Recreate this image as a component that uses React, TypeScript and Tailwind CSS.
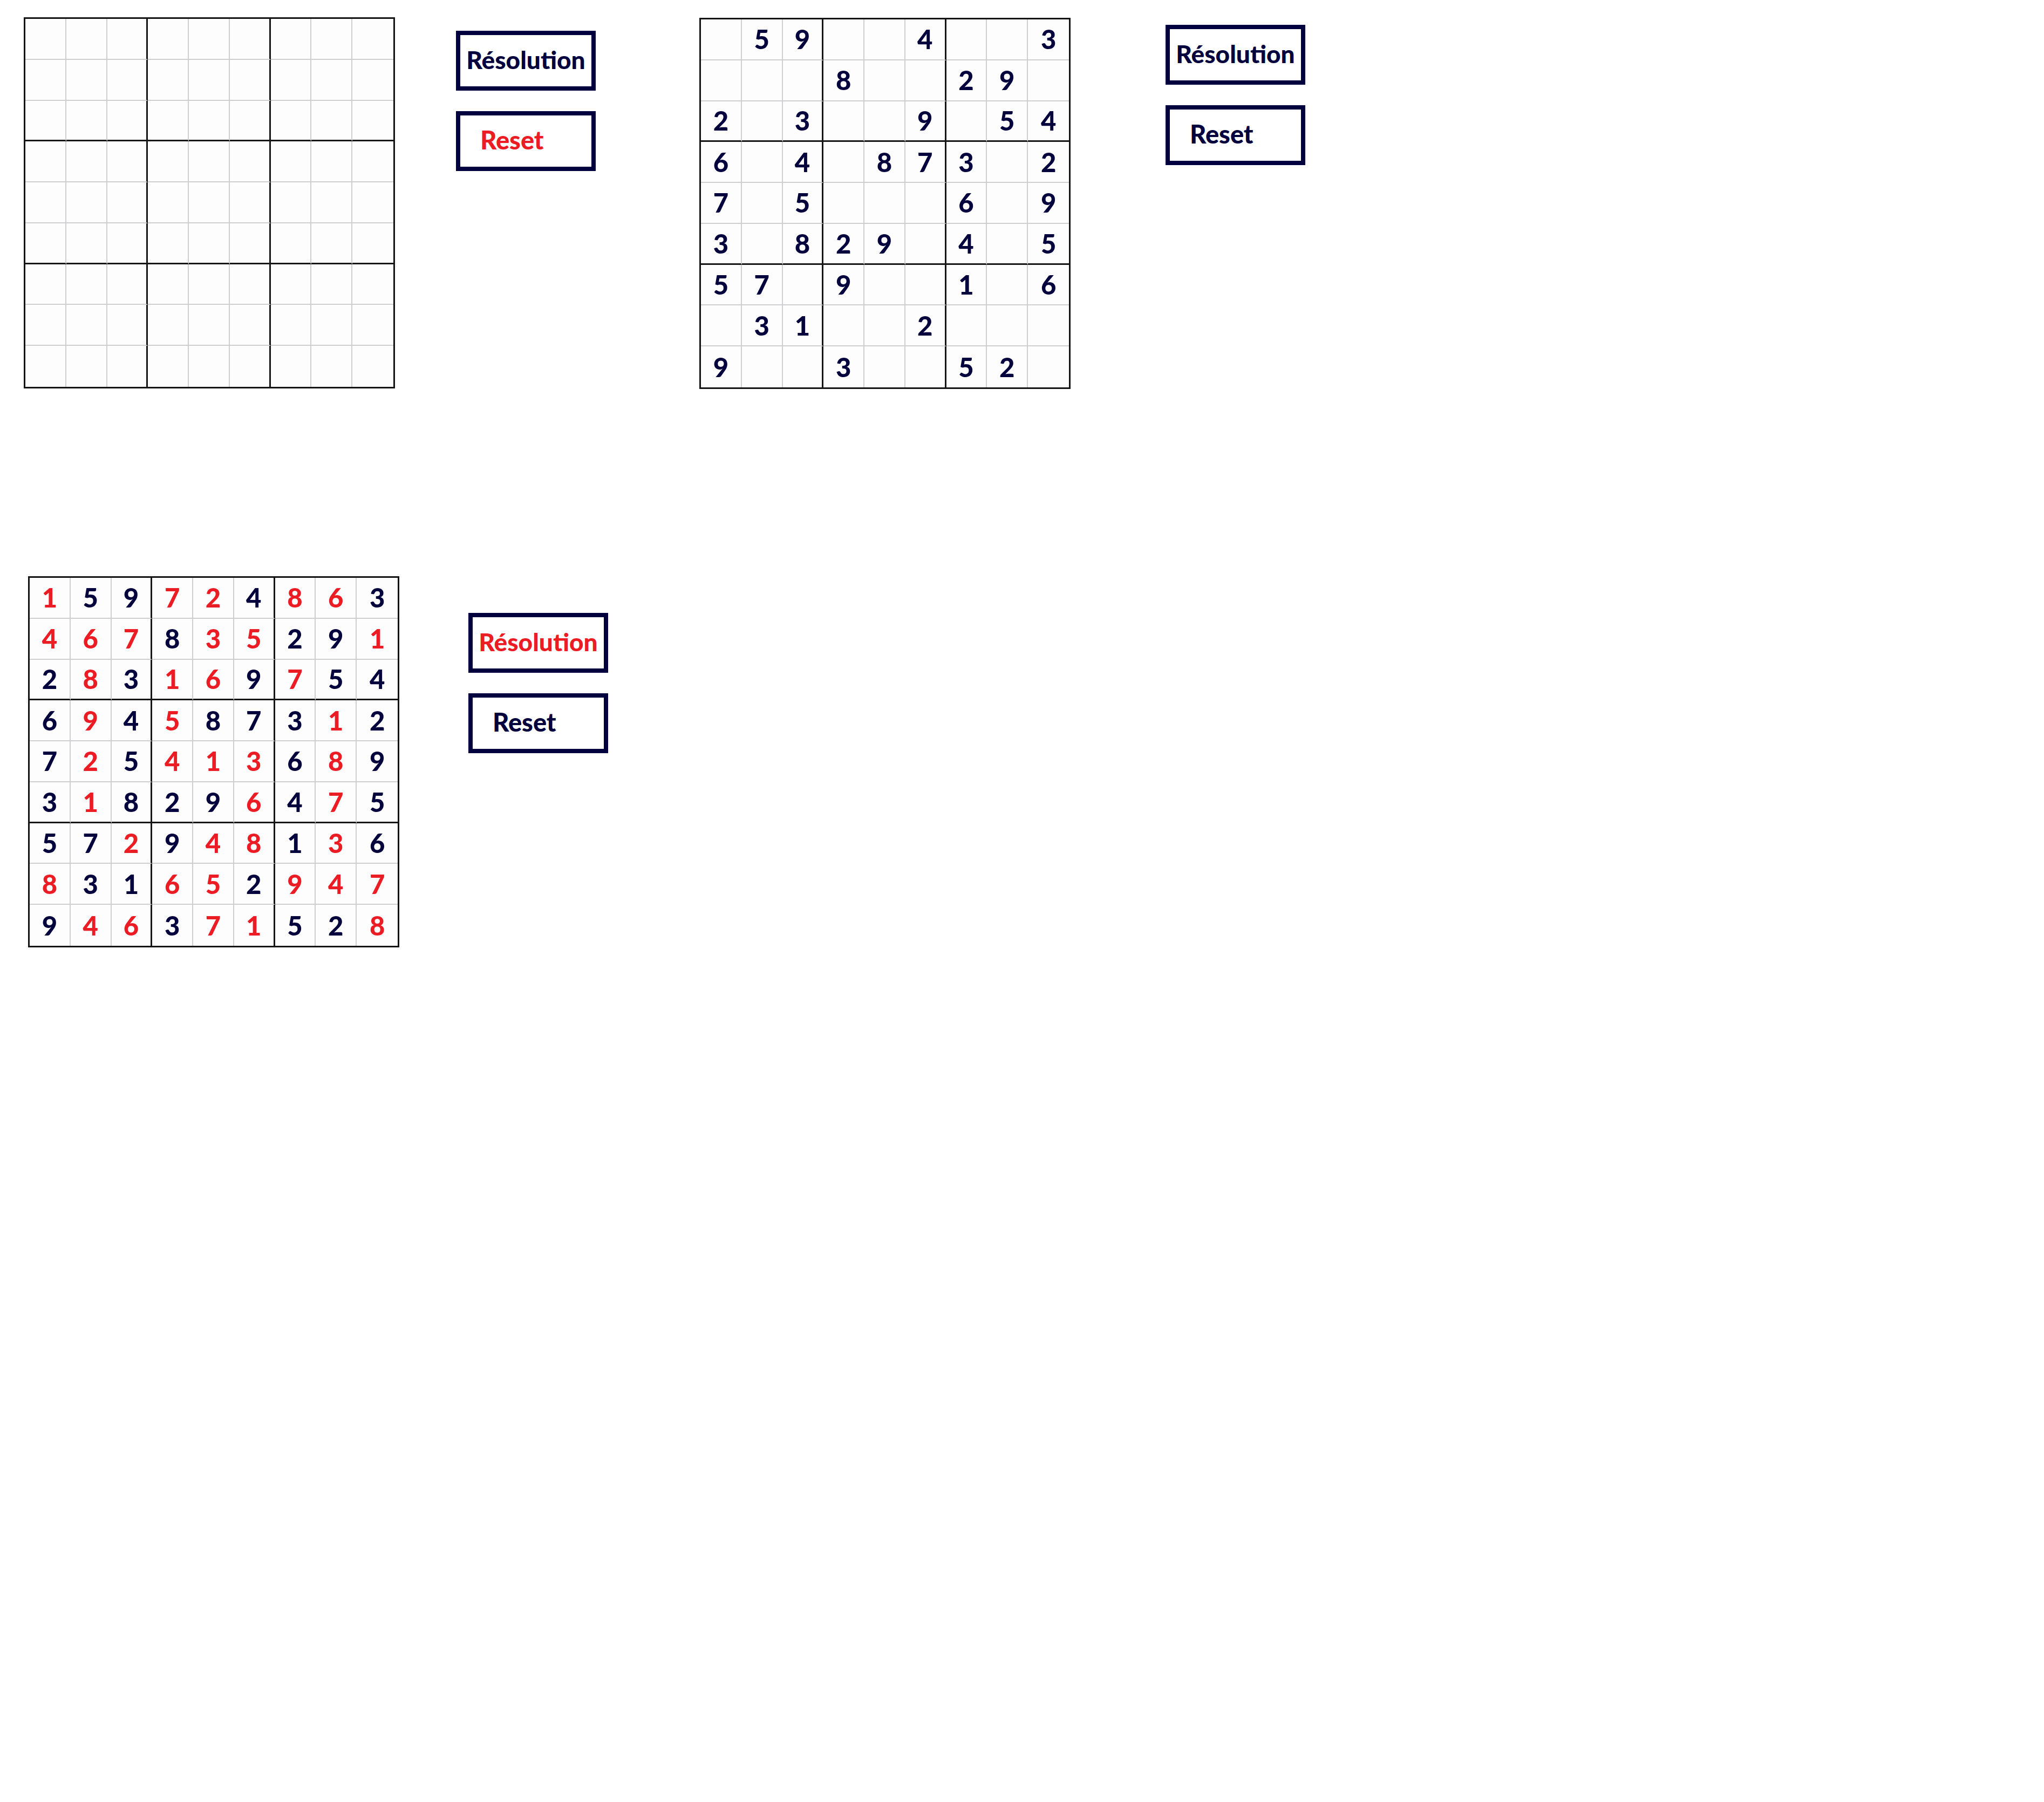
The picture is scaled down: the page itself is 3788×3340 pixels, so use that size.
type Cell = number | null;

const PUZZLE: Cell[][] = [
  [null, 5, 9, null, null, 4, null, null, 3],
  [null, null, null, 8, null, null, 2, 9, null],
  [2, null, 3, null, null, 9, null, 5, 4],
  [6, null, 4, null, 8, 7, 3, null, 2],
  [7, null, 5, null, null, null, 6, null, 9],
  [3, null, 8, 2, 9, null, 4, null, 5],
  [5, 7, null, 9, null, null, 1, null, 6],
  [null, 3, 1, null, null, 2, null, null, null],
  [9, null, null, 3, null, null, 5, 2, null],
];

const SOLUTION: number[][] = [
  [1, 5, 9, 7, 2, 4, 8, 6, 3],
  [4, 6, 7, 8, 3, 5, 2, 9, 1],
  [2, 8, 3, 1, 6, 9, 7, 5, 4],
  [6, 9, 4, 5, 8, 7, 3, 1, 2],
  [7, 2, 5, 4, 1, 3, 6, 8, 9],
  [3, 1, 8, 2, 9, 6, 4, 7, 5],
  [5, 7, 2, 9, 4, 8, 1, 3, 6],
  [8, 3, 1, 6, 5, 2, 9, 4, 7],
  [9, 4, 6, 3, 7, 1, 5, 2, 8],
];

const EMPTY: Cell[][] = Array.from({ length: 9 }, () => Array<Cell>(9).fill(null));

function rightEdge(col: number) {
  if (col === 8) return "";
  if (col === 2 || col === 5) return "border-r-[3px] border-r-[#161616]";
  return "border-r-2 border-r-[#cfcfd1]";
}

function bottomEdge(row: number) {
  if (row === 8) return "";
  if (row === 2 || row === 5) return "border-b-[3px] border-b-[#161616]";
  return "border-b-2 border-b-[#cfcfd1]";
}

type BoardProps = {
  values: Cell[][];
  givens: Cell[][];
};

function Board({ values, givens }: BoardProps) {
  return (
    <div className="grid h-[688px] w-[688px] shrink-0 grid-cols-9 grid-rows-9 border-[3px] border-[#141414] bg-[#fdfdfe]">
      {values.map((row, r) =>
        row.map((value, c) => (
          <div
            key={`${r}-${c}`}
            className={`flex items-center justify-center ${rightEdge(c)} ${bottomEdge(r)}`}
          >
            {value !== null && (
              <span
                className={`text-[49px] font-black leading-none ${
                  givens[r][c] === null ? "text-[#ec1c24]" : "text-[#03023d]"
                }`}
              >
                {value}
              </span>
            )}
          </div>
        )),
      )}
    </div>
  );
}

type ControlsProps = {
  className: string;
  active?: "resolution" | "reset";
};

function Controls({ className, active }: ControlsProps) {
  return (
    <div className={`flex flex-col gap-[38px] ${className}`}>
      <button
        type="button"
        className={`flex h-[111px] w-[259px] items-center justify-center border-[8px] border-[#02003d] bg-white pb-[4px] text-[46px] font-black leading-none ${
          active === "resolution" ? "text-[#ec1c24]" : "text-[#02003d]"
        }`}
      >
        Résolution
      </button>
      <button
        type="button"
        className={`flex h-[111px] w-[259px] items-center justify-start border-[8px] border-[#02003d] bg-white pb-[4px] pl-[37px] text-[47px] font-black leading-none ${
          active === "reset" ? "text-[#ec1c24]" : "text-[#02003d]"
        }`}
      >
        Reset
      </button>
    </div>
  );
}

export default function App() {
  return (
    <div className="min-h-[3340px] w-[3788px] bg-white font-['Lato','Liberation_Sans',sans-serif]">
      <div className="flex items-start">
        <section className="ml-[44px] mt-[32px] flex items-start">
          <Board values={EMPTY} givens={EMPTY} />
          <Controls className="ml-[113px] mt-[25px]" active="reset" />
        </section>
        <section className="ml-[192px] mt-[33px] flex items-start">
          <Board values={PUZZLE} givens={PUZZLE} />
          <Controls className="ml-[176px] mt-[13px]" />
        </section>
      </div>
      <section className="ml-[52px] mt-[347px] flex items-start">
        <Board values={SOLUTION} givens={PUZZLE} />
        <Controls className="ml-[128px] mt-[68px]" active="resolution" />
      </section>
    </div>
  );
}
